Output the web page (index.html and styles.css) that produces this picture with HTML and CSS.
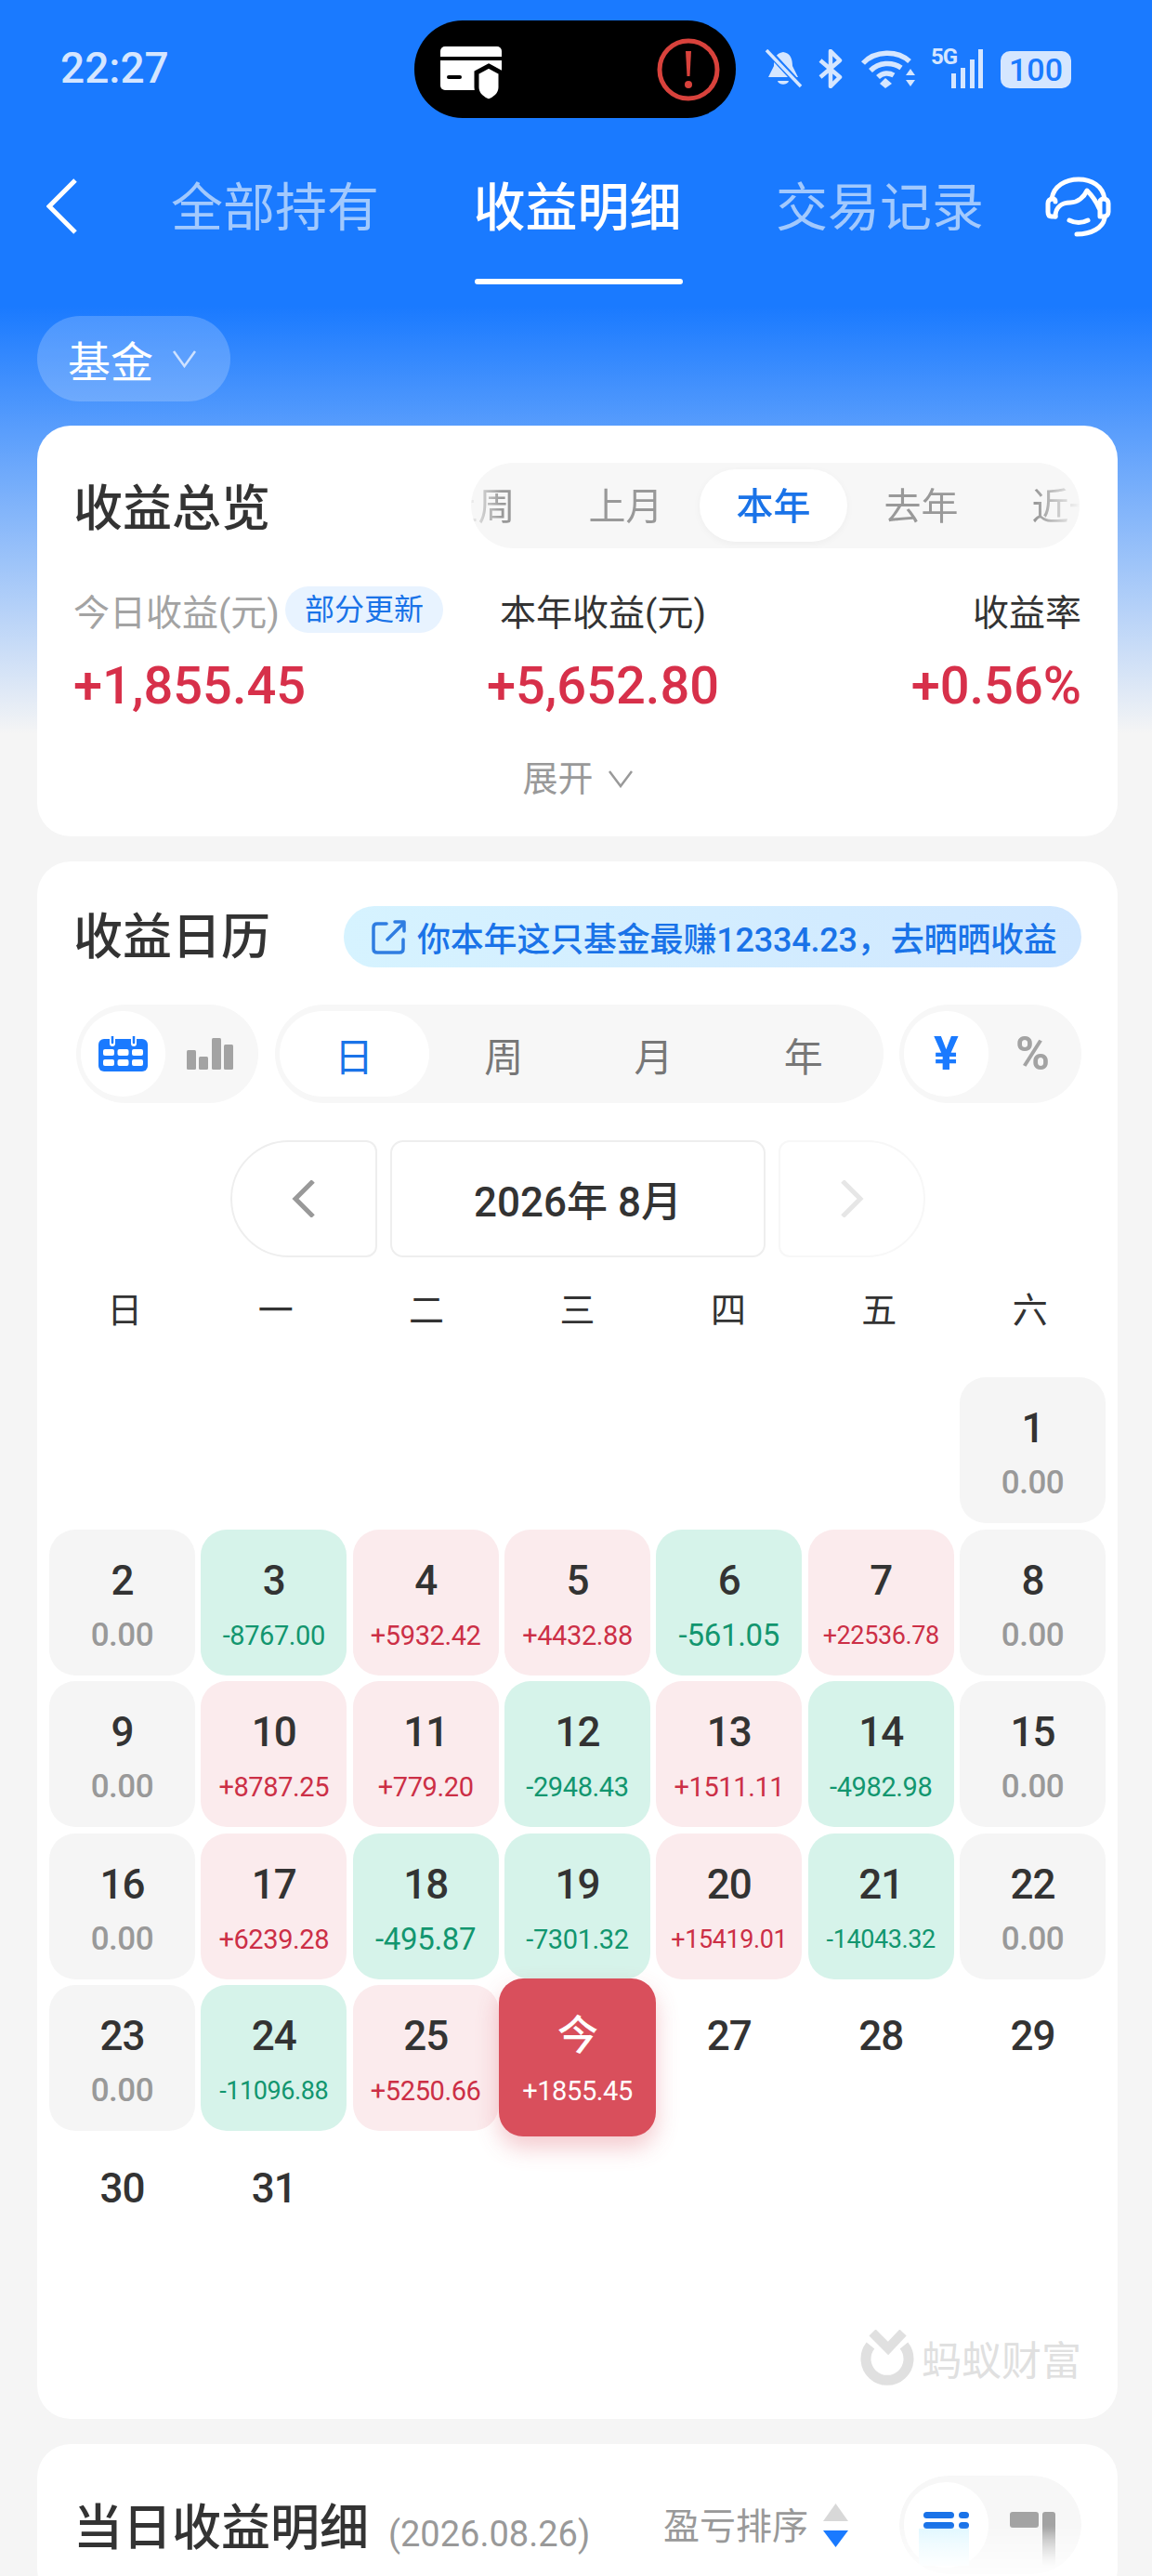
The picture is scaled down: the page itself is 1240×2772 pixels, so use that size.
FILE: index.html
```html
<!DOCTYPE html>
<html lang="zh-CN">
<head>
    <meta charset="UTF-8">
    <meta name="viewport" content="width=device-width, initial-scale=1.0">
    <title>收益明细</title>
    <link rel="stylesheet" href="styles.css">
</head>
<body>
    <div class="status-bar">
        <span class="time">22:27</span>
        <div class="island">
            <svg class="island-card" width="66" height="60" viewBox="0 0 66 60">
                <rect width="66" height="47" rx="5" fill="#fff"/>
                <rect y="11" width="66" height="4" fill="#000"/>
                <rect x="7" y="31" width="16" height="4" rx="2" fill="#000"/>
                <path d="M52 21L65 28V44C65 52 58 57 52 59C46 57 39 52 39 44V28Z" fill="#fff" stroke="#000" stroke-width="5"/>
            </svg>
            <svg class="island-alert" width="68" height="68" viewBox="0 0 68 68">
                <circle cx="34" cy="34" r="31" fill="none" stroke="#d8423c" stroke-width="5"/>
                <path d="M31 14H37L35.500 41H32.500Z" fill="#d8423c"/>
                <circle cx="34" cy="50" r="4" fill="#d8423c"/>
            </svg>
        </div>
        <div class="status-icons">
            <svg width="41" height="42" viewBox="0 0 41 42">
                <path d="M20 3C28 4 30 11 30 18L36 30H4L10 18C10 11 12 4 20 3Z" fill="#d5e6ff"/>
                <path d="M14 34H26C25 39 15 39 14 34Z" fill="#d5e6ff"/>
                <path d="M2 0L40 41" stroke="#1a7aff" stroke-width="7"/>
                <path d="M2 1L39 40" stroke="#d5e6ff" stroke-width="3.500"/>
            </svg>
            <svg width="28" height="42" viewBox="0 0 28 42">
                <path d="M3 12L24 30L14 40V2L24 12L3 30" fill="none" stroke="#d5e6ff" stroke-width="4.500" stroke-linejoin="round"/>
            </svg>
            <svg width="60" height="42" viewBox="0 0 60 42">
                <path d="M3 15C16 1 40 1 53 13" fill="none" stroke="#d5e6ff" stroke-width="5.500"/>
                <path d="M11 23C20 14 34 13 44 20" fill="none" stroke="#d5e6ff" stroke-width="5.500"/>
                <path d="M19 30C24 25 31 25 36 28" fill="none" stroke="#d5e6ff" stroke-width="5.500"/>
                <path d="M27 31L34 37L27 42L21 37Z" fill="#d5e6ff"/>
                <path d="M54 21L59 28H49ZM49 33H59L54 40Z" fill="#d5e6ff"/>
            </svg>
            <div class="signal">
                <span class="signal-label">5G</span>
                <svg width="45" height="42" viewBox="0 0 45 42">
                    <rect x="11" y="26" width="5" height="16" fill="#d5e6ff"/>
                    <rect x="21" y="20" width="5" height="22" fill="#d5e6ff"/>
                    <rect x="31" y="11" width="5" height="31" fill="#d5e6ff"/>
                    <rect x="40" y="0" width="5" height="42" fill="#d5e6ff"/>
                </svg>
            </div>
            <div class="battery">100</div>
        </div>
    </div>

    <div class="nav">
        <svg class="nav-back" width="33" height="60" viewBox="0 0 33 60">
            <path d="M31 2L3 30L31 58" fill="none" stroke="#fff" stroke-width="5"/>
        </svg>
        <div class="tabs">
            <div class="tab">全部持有</div>
            <div class="tab active">收益明细</div>
            <div class="tab">交易记录</div>
        </div>
        <svg class="nav-service" width="71" height="65" viewBox="0 0 71 65" fill="none" stroke="#fff" stroke-width="5" stroke-linecap="round" stroke-linejoin="round">
            <path d="M7 24C9 10 22 3 36 3C50 3 62 10 64 24"/>
            <path d="M11 43H7C4 43 3 41 3 38V29C3 26 5 24 8 24C10 24 11 25 11 27"/>
            <path d="M11 43C11 32 19 28 27 28C35 28 42 22 45 15C50 20 55 27 58 34"/>
            <path d="M59 27C59 25 61 24 63 24C66 24 68 26 68 29V38C68 41 66 43 63 43H59V27"/>
            <path d="M64 45C62 55 50 62 34 62"/>
            <path d="M26 47Q36 52 46 47"/>
        </svg>
    </div>

    <div class="chip">
        <span>基金</span>
        <svg width="27" height="20" viewBox="0 0 27 20">
            <path d="M2 2L13.500 18L25 2" fill="none" stroke="#cfe2ff" stroke-width="2.500"/>
        </svg>
    </div>

    <section class="card overview">
        <div class="overview-head">
            <h2 class="card-title">收益总览</h2>
            <div class="segment">
                <div class="segment-track">
                    <span class="segment-item">上周</span>
                    <span class="segment-item">上月</span>
                    <span class="segment-item active">本年</span>
                    <span class="segment-item">去年</span>
                    <span class="segment-item">近一年</span>
                </div>
            </div>
        </div>
        <div class="stats">
            <div class="stat">
                <div class="stat-label muted">今日收益(元)<span class="badge">部分更新</span></div>
                <div class="stat-value">+1,855.45</div>
            </div>
            <div class="stat stat-center">
                <div class="stat-label">本年收益(元)</div>
                <div class="stat-value">+5,652.80</div>
            </div>
            <div class="stat stat-right">
                <div class="stat-label">收益率</div>
                <div class="stat-value">+0.56%</div>
            </div>
        </div>
        <div class="expand">
            <span>展开</span>
            <svg width="28" height="20" viewBox="0 0 28 20">
                <path d="M2 2L14 18L26 2" fill="none" stroke="#999" stroke-width="2.500"/>
            </svg>
        </div>
    </section>

    <section class="card calendar-card">
        <div class="calendar-head">
            <h2 class="card-title">收益日历</h2>
            <div class="share">
                <svg width="37" height="37" viewBox="0 0 37 37" fill="none" stroke="#2f7de1" stroke-width="3.500" stroke-linecap="round" stroke-linejoin="round">
                    <path d="M16 4H6C3.500 4 2 5.500 2 8V31C2 33.500 3.500 35 6 35H30C32.500 35 34 33.500 34 31V21"/>
                    <path d="M17 21L35 3M25 2H35V12"/>
                </svg>
                <span>你本年这只基金最赚12334.23，去晒晒收益</span>
            </div>
        </div>

        <div class="toggles">
            <div class="toggle toggle-small">
                <div class="toggle-item active">
                    <svg width="53" height="38" viewBox="0 0 53 38">
                        <rect y="3" width="53" height="35" rx="6" fill="#1a7aff"/>
                        <path d="M15 0V8M38 0V8" stroke="#fff" stroke-width="6" stroke-linecap="round"/>
                        <path d="M15 0V7M38 0V7" stroke="#1a7aff" stroke-width="2.500" stroke-linecap="round"/>
                        <g fill="#fff">
                            <rect x="5" y="14" width="12" height="7" rx="2"/>
                            <rect x="20.500" y="14" width="12" height="7" rx="2"/>
                            <rect x="36" y="14" width="12" height="7" rx="2"/>
                            <rect x="5" y="25" width="12" height="7" rx="2"/>
                            <rect x="20.500" y="25" width="12" height="7" rx="2"/>
                            <rect x="36" y="25" width="12" height="7" rx="2"/>
                        </g>
                    </svg>
                </div>
                <div class="toggle-item">
                    <svg width="50" height="34" viewBox="0 0 50 34" fill="#a3a3a3">
                        <rect y="13" width="10" height="21" rx="1.500"/>
                        <rect x="13" y="20" width="10" height="14" rx="1.500"/>
                        <rect x="27" y="0" width="10" height="34" rx="1.500"/>
                        <rect x="40" y="7" width="10" height="27" rx="1.500"/>
                    </svg>
                </div>
            </div>
            <div class="toggle toggle-wide">
                <div class="toggle-item active">日</div>
                <div class="toggle-item">周</div>
                <div class="toggle-item">月</div>
                <div class="toggle-item">年</div>
            </div>
            <div class="toggle toggle-small toggle-unit">
                <div class="toggle-item active">¥</div>
                <div class="toggle-item">%</div>
            </div>
        </div>

        <div class="month-nav">
            <div class="month-btn month-prev">
                <svg width="26" height="40" viewBox="0 0 26 40">
                    <path d="M23 1L4 20L23 39" fill="none" stroke="#999" stroke-width="5"/>
                </svg>
            </div>
            <div class="month-label">2026年 8月</div>
            <div class="month-btn month-next">
                <svg width="26" height="40" viewBox="0 0 26 40">
                    <path d="M3 1L22 20L3 39" fill="none" stroke="#e6e6e6" stroke-width="5"/>
                </svg>
            </div>
        </div>

        <div class="calendar">
            <div class="week">
                <span>日</span><span>一</span><span>二</span><span>三</span><span>四</span><span>五</span><span>六</span>
            </div>
            <div class="days">
                <div class="day zero first"><b>1</b><i>0.00</i></div>

                <div class="day zero"><b>2</b><i>0.00</i></div>
                <div class="day loss"><b>3</b><i>-8767.00</i></div>
                <div class="day gain"><b>4</b><i>+5932.42</i></div>
                <div class="day gain"><b>5</b><i>+4432.88</i></div>
                <div class="day loss big"><b>6</b><i>-561.05</i></div>
                <div class="day gain small"><b>7</b><i>+22536.78</i></div>
                <div class="day zero"><b>8</b><i>0.00</i></div>

                <div class="day zero"><b>9</b><i>0.00</i></div>
                <div class="day gain"><b>10</b><i>+8787.25</i></div>
                <div class="day gain"><b>11</b><i>+779.20</i></div>
                <div class="day loss"><b>12</b><i>-2948.43</i></div>
                <div class="day gain"><b>13</b><i>+1511.11</i></div>
                <div class="day loss"><b>14</b><i>-4982.98</i></div>
                <div class="day zero"><b>15</b><i>0.00</i></div>

                <div class="day zero"><b>16</b><i>0.00</i></div>
                <div class="day gain"><b>17</b><i>+6239.28</i></div>
                <div class="day loss big"><b>18</b><i>-495.87</i></div>
                <div class="day loss"><b>19</b><i>-7301.32</i></div>
                <div class="day gain small"><b>20</b><i>+15419.01</i></div>
                <div class="day loss small"><b>21</b><i>-14043.32</i></div>
                <div class="day zero"><b>22</b><i>0.00</i></div>

                <div class="day zero"><b>23</b><i>0.00</i></div>
                <div class="day loss small"><b>24</b><i>-11096.88</i></div>
                <div class="day gain"><b>25</b><i>+5250.66</i></div>
                <div class="day today"><b>今</b><i>+1855.45</i></div>
                <div class="day"><b>27</b></div>
                <div class="day"><b>28</b></div>
                <div class="day"><b>29</b></div>

                <div class="day"><b>30</b></div>
                <div class="day"><b>31</b></div>
            </div>
        </div>

        <div class="brand">
            <svg width="58" height="60" viewBox="0 0 58 60" fill="none" stroke="#e0e0e0">
                <path d="M11 17A23 23 0 1 0 47 17" stroke-width="11"/>
                <path d="M13 3L30 20L46 3" stroke-width="10"/>
            </svg>
            <span>蚂蚁财富</span>
        </div>
    </section>

    <section class="card daily-card">
        <h2 class="card-title">当日收益明细</h2>
        <span class="daily-date">(2026.08.26)</span>
        <div class="sort">
            <span>盈亏排序</span>
            <svg width="27" height="47" viewBox="0 0 27 47">
                <path d="M13.500 0L27 19H0Z" fill="#d8d8d8"/>
                <path d="M0 29H27L13.500 47Z" fill="#1a7aff"/>
            </svg>
        </div>
        <div class="toggle toggle-small toggle-fade">
            <div class="toggle-item active">
                <svg class="fade-icon" width="60" height="60" viewBox="0 0 60 60">
                    <defs>
                        <linearGradient id="glow" x1="0" y1="0" x2="0" y2="1">
                            <stop offset="0" stop-color="#dff7ff"/>
                            <stop offset="1" stop-color="#f7fdff"/>
                        </linearGradient>
                    </defs>
                    <rect y="18" width="54" height="40" fill="url(#glow)"/>
                    <rect x="5" y="0" width="33" height="7" rx="3.500" fill="#1a73e8"/>
                    <rect x="43" y="0" width="11" height="7" rx="3.500" fill="#1a73e8"/>
                    <rect x="5" y="11" width="33" height="7" rx="3.500" fill="#1a73e8"/>
                    <rect x="43" y="11" width="11" height="7" rx="3.500" fill="#1a73e8"/>
                </svg>
            </div>
            <div class="toggle-item">
                <svg class="fade-icon" width="50" height="60" viewBox="0 0 50 60">
                    <defs>
                        <linearGradient id="fall" x1="0" y1="0" x2="0" y2="1">
                            <stop offset="0.300" stop-color="#a3a3a3"/>
                            <stop offset="1" stop-color="#f4f4f4"/>
                        </linearGradient>
                    </defs>
                    <rect width="31" height="17" rx="3" fill="#a3a3a3"/>
                    <rect x="35" width="14" height="58" rx="3" fill="url(#fall)"/>
                </svg>
            </div>
        </div>
    </section>
</body>
</html>
```

FILE: styles.css
```css
* {
    box-sizing: border-box;
}

body {
    margin: 0;
    width: 1240px;
    height: 2772px;
    overflow: hidden;
    font-family: Roboto, 'Noto Sans CJK SC', sans-serif;
    color: #333;
    background: linear-gradient(#1a7aff 330px, #f5f5f5 790px);
}

/* status bar */
.status-bar {
    display: flex;
    align-items: flex-start;
    height: 145px;
    padding: 22px 0 0 65px;
}

.time {
    width: 116px;
    margin-top: 21px;
    font-size: 46px;
    line-height: 60px;
    font-weight: 500;
    color: #d5e6ff;
    white-space: nowrap;
}

.island {
    display: flex;
    align-items: center;
    justify-content: space-between;
    width: 346px;
    height: 105px;
    margin-left: 265px;
    padding: 0 17px 0 28px;
    background: #000;
    border-radius: 52px;
}

.island-card {
    margin-top: 10px;
}

.status-icons {
    display: flex;
    align-items: flex-start;
    margin: 31px 0 0 31px;
}

.status-icons svg {
    display: block;
}

.status-icons > svg:nth-child(2) {
    margin-left: 16px;
}

.status-icons > svg:nth-child(3) {
    margin-left: 18px;
}

.signal {
    position: relative;
    margin-left: 27px;
}

.signal-label {
    position: absolute;
    left: -11px;
    top: -4px;
    font-size: 24px;
    line-height: 24px;
    font-weight: 700;
    letter-spacing: -1px;
    color: #d5e6ff;
}

.battery {
    width: 76px;
    height: 40px;
    margin: 2px 0 0 19px;
    background: #d5e6ff;
    border-radius: 10px;
    font-size: 34px;
    line-height: 40px;
    font-weight: 500;
    text-align: center;
    color: #1a7aff;
}

/* nav tabs */
.nav {
    display: flex;
    align-items: flex-start;
    height: 161px;
    padding: 47px 0 0 50px;
}

.tabs {
    display: flex;
    gap: 101.500px;
    margin: -6px 0 0 101px;
}

.tab {
    font-size: 56px;
    line-height: 76px;
    white-space: nowrap;
    color: #a2c9fd;
}

.tab.active {
    font-weight: 500;
    color: #fff;
}

.tab.active::after {
    content: '';
    display: block;
    height: 6px;
    margin: 38px -1px 0 1px;
    background: #fff;
    border-radius: 3px;
}

.nav-service {
    margin: -2px 0 0 66px;
}

.chip {
    display: flex;
    align-items: center;
    gap: 20px;
    width: 208px;
    height: 92px;
    margin: 34px 0 0 40px;
    padding-left: 33px;
    background: rgba(255, 255, 255, 0.2);
    border-radius: 46px;
    font-size: 46px;
    color: #fff;
}

/* cards */
.card {
    width: 1163px;
    margin-left: 40px;
    background: #fff;
    border-radius: 36px;
}

.card-title {
    margin: 0 0 0 -3px;
    padding-top: 8px;
    font-size: 53px;
    line-height: 72px;
    font-weight: 500;
    white-space: nowrap;
    color: #333;
}

.overview {
    height: 442px;
    margin-top: 26px;
    padding: 40px 41px 0 42px;
}

.overview-head {
    display: flex;
    align-items: center;
    justify-content: space-between;
}

.segment {
    width: 655px;
    height: 92px;
    overflow: hidden;
    background: #f7f7f7;
    border-radius: 46px;
}

.segment-track {
    display: flex;
    height: 100%;
    padding: 7px 0;
    margin-left: -72px;
    width: 760px;
    -webkit-mask-image: linear-gradient(90deg, transparent 68px, #000 105px, #000 680px, transparent 727px);
    mask-image: linear-gradient(90deg, transparent 68px, #000 105px, #000 680px, transparent 727px);
}

.segment-item {
    flex: none;
    height: 78px;
    padding: 0 39.500px;
    font-size: 40px;
    line-height: 82px;
    white-space: nowrap;
    color: #999;
}

.segment-item.active {
    background: #fff;
    border-radius: 39px;
    box-shadow: 0 2px 8px rgba(0, 0, 0, 0.04);
    font-weight: 500;
    color: #1a73e8;
}

.stats {
    display: grid;
    grid-template-columns: 432px 276px 1fr;
    margin: 38px -2px 0 -3px;
}

.stat-label {
    display: flex;
    align-items: center;
    height: 56px;
    font-size: 39px;
    white-space: nowrap;
}

.stat-label.muted {
    color: #a3a3a3;
}

.badge {
    height: 50px;
    margin-left: 6px;
    padding: 0 21px;
    background: #e8f3ff;
    border-radius: 25px;
    font-size: 32px;
    line-height: 50px;
    color: #1a73e8;
}

.stat-center .stat-label {
    justify-content: center;
}

.stat-right .stat-label {
    justify-content: flex-end;
}

.stat-value {
    margin-top: 16px;
    font-size: 56px;
    line-height: 76px;
    font-weight: 500;
    white-space: nowrap;
    color: #d7304a;
}

.stat-center .stat-value {
    text-align: center;
}

.stat-right .stat-value {
    text-align: right;
}

.expand {
    display: flex;
    align-items: center;
    justify-content: center;
    gap: 15px;
    margin-top: 34px;
    font-size: 38px;
    line-height: 56px;
    color: #999;
}

.calendar-card {
    height: 1676px;
    margin-top: 27px;
    padding: 48px 39px 0 42px;
}

.calendar-head {
    display: flex;
    align-items: center;
    justify-content: space-between;
    height: 66px;
}

.calendar-head .card-title {
    padding-top: 2px;
}

.share {
    display: flex;
    align-items: center;
    gap: 12px;
    width: 794px;
    height: 66px;
    padding-left: 30px;
    background: linear-gradient(90deg, #d6f3ff, #d0e7ff);
    border-radius: 33px;
    font-size: 36px;
    font-weight: 500;
    letter-spacing: -0.200px;
    white-space: nowrap;
    color: #1a73e8;
}

.toggles {
    display: flex;
    justify-content: space-between;
    margin-top: 40px;
}

.toggle {
    display: flex;
    height: 106px;
    padding: 7px 5px;
    background: #f7f7f7;
    border-radius: 53px;
}

.toggle-item {
    display: flex;
    flex: 1;
    align-items: center;
    justify-content: center;
    border-radius: 46px;
}

.toggle-item.active {
    background: #fff;
}

.toggle-small {
    width: 196px;
}

.toggle-small .toggle-item.active {
    flex: none;
    width: 91px;
}

.toggle-wide {
    width: 655px;
    font-size: 42px;
    color: #777;
}

.toggle-wide .toggle-item.active {
    color: #1a73e8;
}

.toggle-unit {
    font-size: 50px;
    font-weight: 700;
    color: #a3a3a3;
}

.toggle-unit .toggle-item.active {
    color: #1a7aff;
}

.month-nav {
    display: flex;
    justify-content: center;
    gap: 14px;
    margin: 40px 2px 0 0;
}

.month-btn,
.month-label {
    display: flex;
    align-items: center;
    justify-content: center;
    height: 126px;
    border: 2px solid #eee;
}

.month-btn {
    width: 158px;
}

.month-prev {
    border-radius: 63px 12px 12px 63px;
}

.month-next {
    border-color: #f7f7f7;
    border-radius: 12px 63px 63px 12px;
}

.month-label {
    width: 404px;
    border-radius: 14px;
    font-size: 44px;
    font-weight: 500;
}

/* calendar grid */
.calendar {
    margin: 30px -26px 0 -29px;
}

.week {
    display: grid;
    grid-template-columns: repeat(7, 1fr);
    font-size: 38px;
    line-height: 54px;
    text-align: center;
}

.days {
    display: grid;
    grid-template-columns: repeat(7, 1fr);
    grid-auto-rows: 157px;
    gap: 6.500px;
    margin-top: 45px;
}

.day {
    display: flex;
    flex-direction: column;
    align-items: center;
    padding-top: 29px;
    border-radius: 28px;
}

.day.first {
    grid-column-start: 7;
}

.day b {
    font-size: 44px;
    line-height: 52px;
    font-weight: 500;
    letter-spacing: -1px;
    color: #333;
}

.day i {
    margin-top: 15px;
    font-style: normal;
    font-size: 29px;
    line-height: 36px;
    letter-spacing: -0.400px;
    white-space: nowrap;
}

.day.big i {
    font-size: 33px;
    letter-spacing: -0.300px;
}

.day.small i {
    font-size: 27px;
    letter-spacing: -0.400px;
}

.zero {
    background: #f5f5f5;
}

.day.zero i {
    font-size: 35px;
    font-weight: 500;
    letter-spacing: -0.500px;
    color: #999;
}

.loss {
    background: #d6f3ea;
}

.loss i {
    color: #12966f;
}

.gain {
    background: #fbebed;
}

.gain i {
    color: #cc2f46;
}

.day.today {
    margin: -7px -6px -6px;
    padding-top: 36px;
    background: #d94f5c;
    border-radius: 26px;
    box-shadow: 0 12px 24px rgba(217, 79, 92, 0.3);
}

.today b,
.today i {
    color: #fff;
}

.brand {
    display: flex;
    align-items: center;
    justify-content: flex-end;
    gap: 8px;
    margin: 49px 0 0 0;
    font-size: 43px;
    color: #e0e0e0;
}

.daily-card {
    position: relative;
    display: flex;
    align-items: center;
    height: 170px;
    margin-top: 27px;
    padding: 34px 39px 30px 42px;
}

.daily-date {
    margin: 20px 0 0 21px;
    font-size: 38px;
    white-space: nowrap;
    color: #999;
}

.sort {
    display: flex;
    align-items: center;
    gap: 16px;
    margin: -4px 0 0 auto;
    font-size: 39px;
    white-space: nowrap;
    color: #999;
}

.sort svg {
    margin-top: 4px;
}

.toggle-fade {
    flex: none;
    margin-left: 55px;
    -webkit-mask-image: linear-gradient(#000 50%, rgba(0, 0, 0, 0.2) 100%);
    mask-image: linear-gradient(#000 50%, rgba(0, 0, 0, 0.2) 100%);
}

.toggle-fade .toggle-item {
    align-items: flex-start;
    padding-top: 32px;
}
```
